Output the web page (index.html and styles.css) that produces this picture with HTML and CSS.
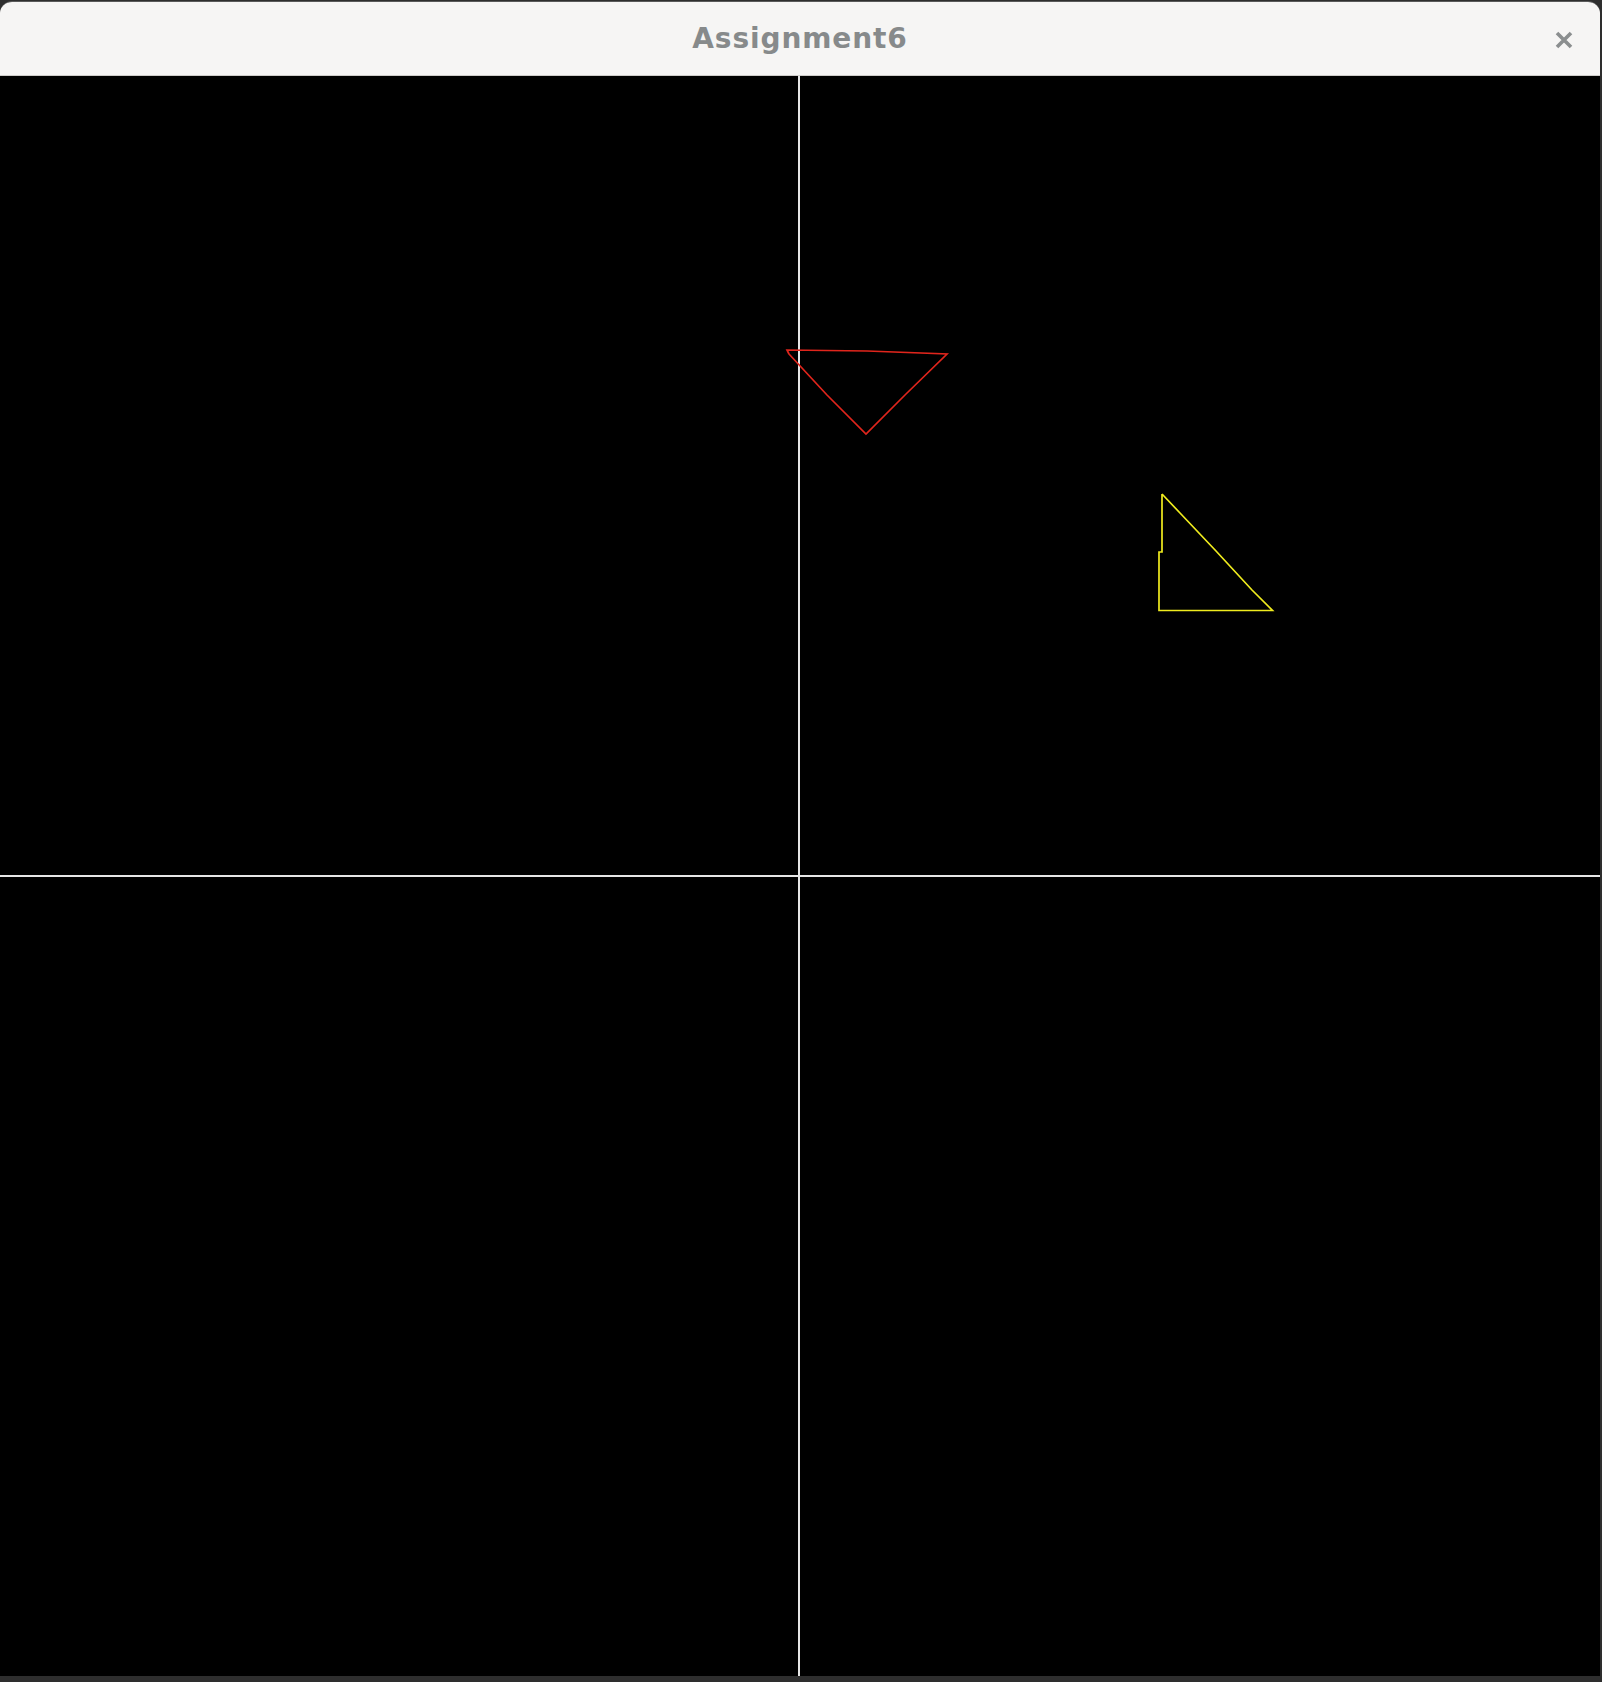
FILE: index.html
```html
<!DOCTYPE html>
<html>
<head>
<meta charset="utf-8">
<title>Assignment6</title>
<link rel="stylesheet" href="styles.css">
</head>
<body>
<div class="window">
  <header class="titlebar">
    <span class="title">Assignment6</span>
    <button class="close" aria-label="Close">
      <svg width="18" height="18" viewBox="0 0 18 18"><path d="M2 2 L16 16 M16 2 L2 16" stroke="#8b8e8f" stroke-width="3.6" stroke-linecap="butt"/></svg>
    </button>
  </header>
  <main class="canvas">
    <svg width="1600" height="1600" viewBox="0 0 1600 1600">
      <line x1="799" y1="0" x2="799" y2="1600" stroke="#e6e6e6" stroke-width="2"/>
      <line x1="0" y1="800" x2="1600" y2="800" stroke="#e6e6e6" stroke-width="2"/>
      <polyline points="789,278 787,274 867,275 947,278 906,318 866,358 827,319 789,278" fill="none" stroke="#e0251c" stroke-width="1.7"/>
      <polyline points="1162,418 1180,437 1216,475 1252,514 1272.5,534.5 1159,534.5 1159,476 1162,476 1162,418" fill="none" stroke="#f0ec1e" stroke-width="1.7"/>
    </svg>
  </main>
</div>
</body>
</html>
```
FILE: styles.css
```css
html, body {
  margin: 0;
  padding: 0;
}
body {
  width: 1602px;
  height: 1682px;
  background: #2e2e2e;
  overflow: hidden;
}
.window {
  width: 1600px;
  margin-top: 1px;
  border-radius: 12px 12px 0 0;
  overflow: hidden;
  background: #000;
  border-top: 1px solid #5a5a5a;
}
.titlebar {
  height: 73px;
  background: #f6f5f4;
  border-bottom: 1px solid #cfcdca;
  display: flex;
  align-items: center;
  justify-content: center;
  position: relative;
}
.title {
  font-family: "DejaVu Sans", sans-serif;
  font-weight: bold;
  font-size: 28px;
  letter-spacing: 0.9px;
  color: #878a8b;
}
.close {
  position: absolute;
  right: 27px;
  top: 29px;
  width: 18px;
  height: 18px;
  padding: 0;
  border: 0;
  background: none;
  display: block;
}
.close svg { display: block; }
.canvas {
  height: 1600px;
  background: #000;
}
.canvas svg { display: block; }
```
